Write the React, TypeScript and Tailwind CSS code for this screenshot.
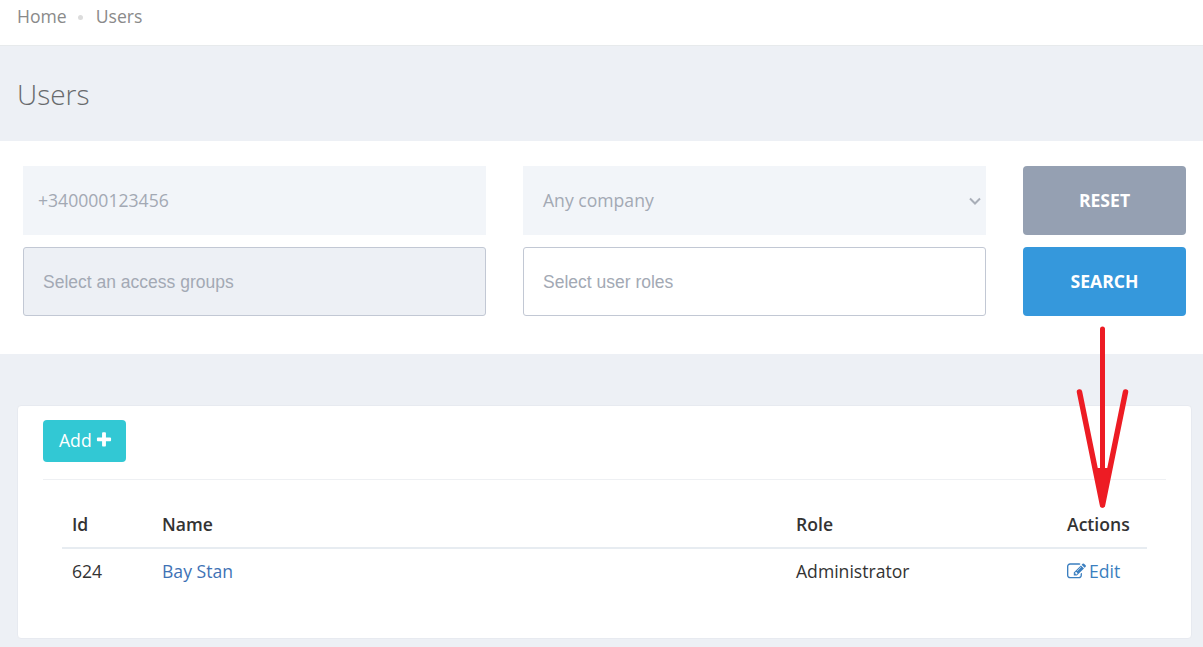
function RedArrow() {
  return (
    <svg className="absolute left-[1070px] top-[320px]" width="70" height="195" viewBox="0 0 70 195" fill="none">
      <path d="M32.5 9V185" stroke="#ed1c24" strokeWidth="5" strokeLinecap="round" />
      <path d="M9.5 72L32.5 185L55.5 72" stroke="#ed1c24" strokeWidth="5.5" strokeLinecap="round" strokeLinejoin="round" />
      <path d="M24.5 148L32.5 187L40.5 148Z" fill="#ed1c24" />
    </svg>
  );
}

function PlusIcon() {
  return (
    <svg width="18" height="18" viewBox="0 0 1792 1792" fill="currentColor">
      <path d="M1600 736v192q0 40-28 68t-68 28h-416v416q0 40-28 68t-68 28h-192q-40 0-68-28t-28-68v-416h-416q-40 0-68-28t-28-68v-192q0-40 28-68t68-28h416v-416q0-40 28-68t68-28h192q40 0 68 28t28 68v416h416q40 0 68 28t28 68z" />
    </svg>
  );
}

function EditIcon() {
  return (
    <svg width="19" height="19" viewBox="0 0 1792 1792" fill="currentColor">
      <path d="M888 1184l116-116-152-152-116 116v56h96v96h56zm440-720q-16-16-33 1l-350 350q-17 17-1 33t33-1l350-350q17-17 1-33zm80 594v190q0 119-84.5 203.5t-203.5 84.5h-832q-119 0-203.5-84.5t-84.5-203.5v-832q0-119 84.5-203.5t203.5-84.5h832q63 0 117 25 15 7 18 23 3 17-9 29l-49 49q-14 14-32 8-23-6-45-6h-832q-66 0-113 47t-47 113v832q0 66 47 113t113 47h832q66 0 113-47t47-113v-126q0-13 9-22l64-64q15-15 35-7t20 29zm-96-738l288 288-672 672h-288v-288zm444 132l-92 92-288-288 92-92q28-28 68-28t68 28l152 152q28 28 28 68t-28 68z" />
    </svg>
  );
}

export default function App() {
  return (
    <div className="relative h-[647px] w-[1203px] overflow-hidden bg-[#edf0f5] font-['Open_Sans',sans-serif]">
      <div className="flex h-[46px] items-start border-b border-[#e7eaec] bg-white pl-[17px] pt-[4px] text-[17.6px] leading-[24px] text-[#8a8a8a]">
        <span>Home</span>
        <span className="ml-[11px] mr-[13px] mt-[11px] h-[5px] w-[5px] rounded-full bg-[#dcdcdc]" />
        <span>Users</span>
      </div>

      <div className="flex h-[95px] items-center pl-[17px]">
        <h1 className="text-[28px] font-light text-[#676a6c]">Users</h1>
      </div>

      <div className="grid h-[213px] grid-cols-[463px_463px_163px] grid-rows-[69px_69px] content-start gap-x-[37px] gap-y-[12px] bg-white pl-[23px] pt-[25px]">
        <div className="flex items-center bg-[#f2f5f9] pl-[15px] text-[17.6px] text-[#a3a9b4]">+340000123456</div>
        <div className="flex items-center justify-between bg-[#f2f5f9] pl-[20px] pr-[5px] text-[17.6px] text-[#a3a9b4]">
          <span className="pb-[1px]">Any company</span>
          <svg width="12" height="8" viewBox="0 0 12 8" fill="none">
            <path d="M1 1.5L6 6.5L11 1.5" stroke="#a9aeb8" strokeWidth="2" />
          </svg>
        </div>
        <button className="rounded-[4px] bg-[#95a0b2] text-[17.6px] font-bold text-white">RESET</button>
        <div className="flex items-center rounded-[3px] border border-[#c2c8d4] bg-[#edf0f5] pl-[19px] pt-[1px] font-['Liberation_Sans',sans-serif] text-[17.5px] text-[#a3a9b4]">
          Select an access groups
        </div>
        <div className="flex items-center rounded-[3px] border border-[#c2c8d4] bg-white pl-[19px] pt-[1px] font-['Liberation_Sans',sans-serif] text-[17.5px] text-[#a3a9b4]">
          Select user roles
        </div>
        <button className="rounded-[4px] bg-[#3598dc] text-[17.6px] font-bold text-white">SEARCH</button>
      </div>

      <div className="ml-[17px] mt-[51px] h-[234px] w-[1175px] rounded-[4px] border border-[#e7eaf0] bg-white px-[25px] pt-[14px]">
        <div className="border-b border-[#eef0f3] pb-[17px]">
          <button className="flex h-[42px] w-[83px] items-center gap-[3px] rounded-[4px] bg-[#32c8d4] pb-[2px] pl-[16px] text-[17.6px] text-white">
            Add <PlusIcon />
          </button>
        </div>
        <table className="ml-[19px] mt-[24px] w-[1085px] table-fixed text-left text-[17.6px] text-[#333333]">
          <thead>
            <tr className="h-[44px] border-b-2 border-[#e7ecf1]">
              <th className="w-[90px] pb-[2px] pl-[10px] font-semibold">Id</th>
              <th className="w-[634px] pb-[2px] pl-[10px] font-semibold">Name</th>
              <th className="w-[271px] pb-[2px] pl-[10px] font-semibold">Role</th>
              <th className="pb-[2px] pl-[10px] font-semibold">Actions</th>
            </tr>
          </thead>
          <tbody>
            <tr className="h-[46px]">
              <td className="pl-[10px]">624</td>
              <td className="pl-[10px] text-[#3f72b5]">Bay Stan</td>
              <td className="pl-[10px]">Administrator</td>
              <td className="pl-[10px] text-[#3b7fc0]">
                <span className="flex items-center gap-[3px]">
                  <EditIcon /> Edit
                </span>
              </td>
            </tr>
          </tbody>
        </table>
      </div>

      <RedArrow />
    </div>
  );
}
